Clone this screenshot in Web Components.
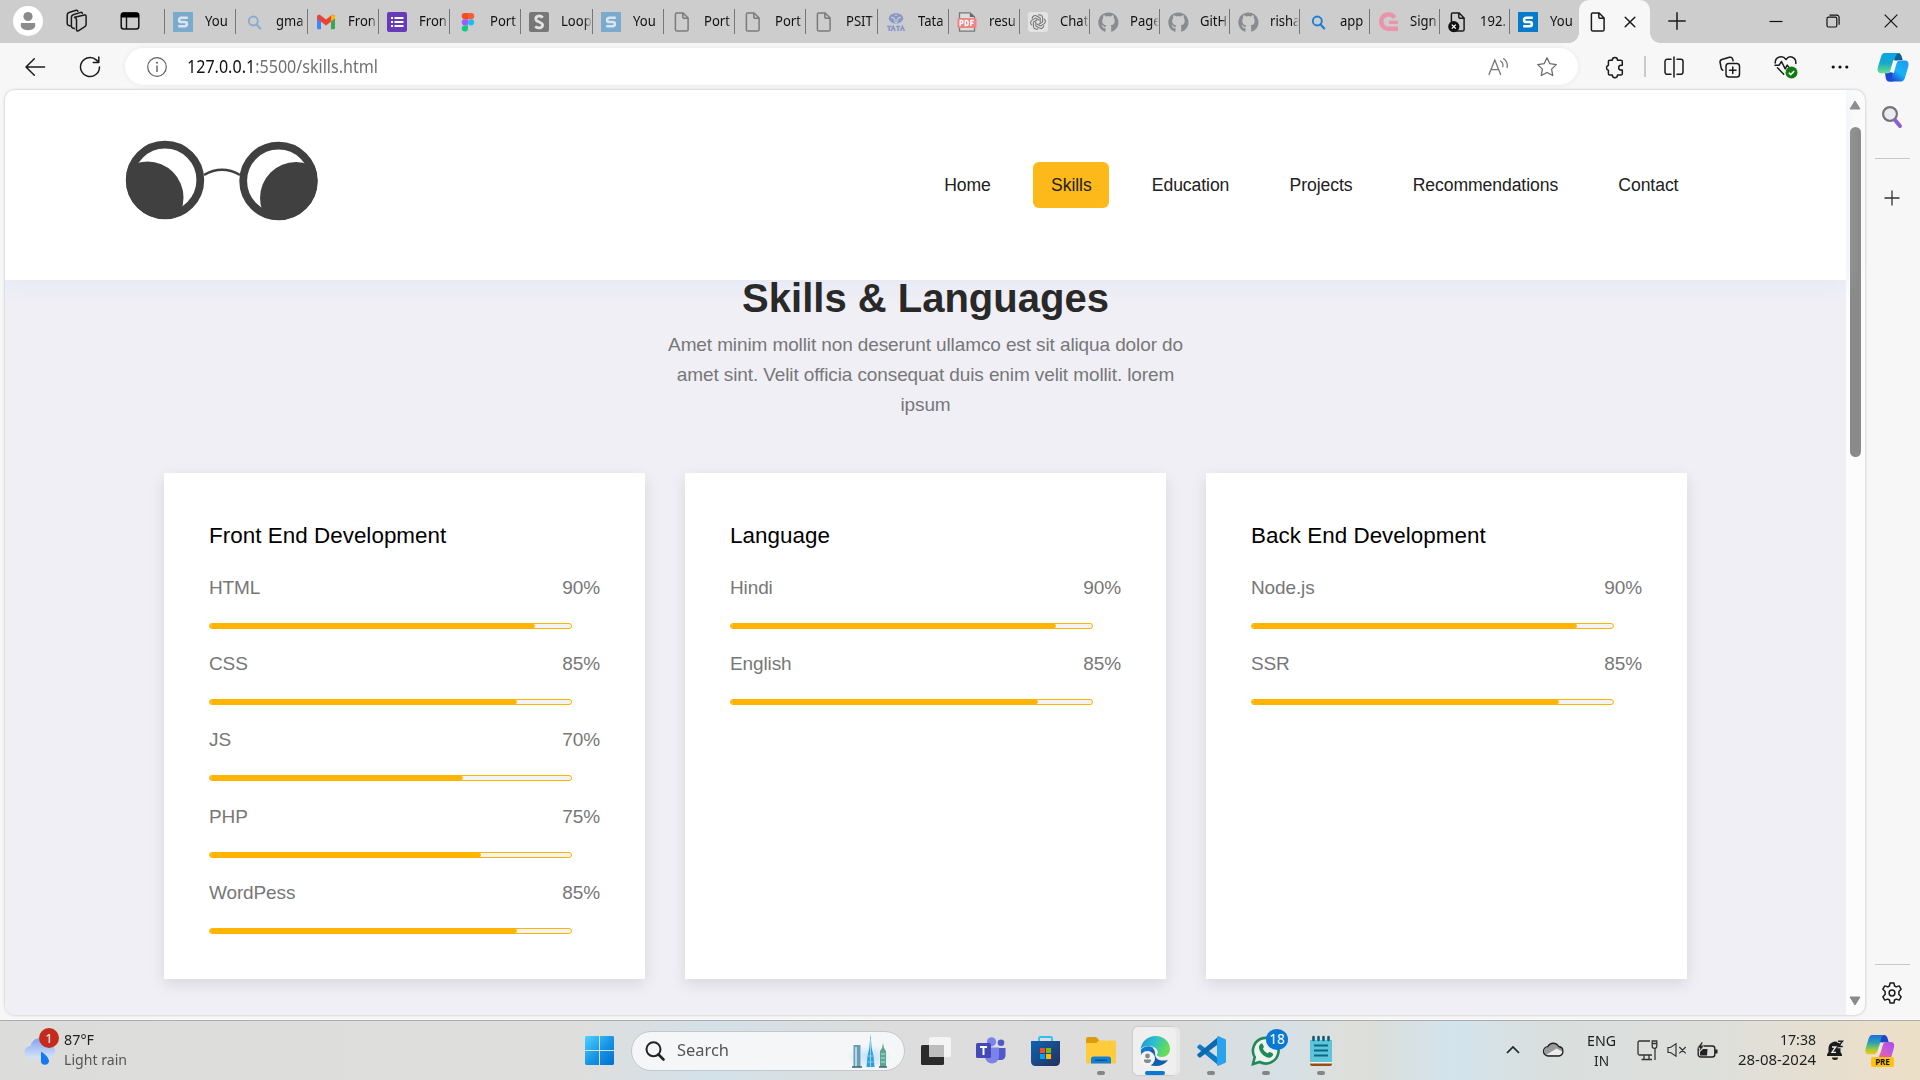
<!DOCTYPE html>
<html lang="en">
<head>
<meta charset="utf-8">
<title>Skills</title>
<style>
html,body{margin:0;padding:0}
body{width:1920px;height:1080px;overflow:hidden;background:#f7f7f7;font-family:"Noto Sans","Open Sans",sans-serif}
</style>
</head>
<body>
<desktop-screen></desktop-screen>
<script>
const STROKE = 'fill="none" stroke="#1b1b1b" stroke-width="1.5" stroke-linecap="round" stroke-linejoin="round"';
const GH = '<path fill="#888b8f" d="M10 .4a10 10 0 0 0-3.2 19.4c.5.1.7-.2.7-.5v-3.2c-2.400 .5-2.9-1-3.200-1.800-.3-.6-.8-.9-1.200-1.200.8-.4 1.700.1 2.300 1 .6.900 1.400 1 2.300.6.1-.6.3-1.100.7-1.400-2.700-.3-4.200-1.500-4.200-4.600 0-1.200.4-2 1-2.700-.2-.8-.2-1.800.2-2.700 1 0 1.900.6 2.700 1.100a9 9 0 0 1 4.700 0c.8-.5 1.700-1.100 2.700-1.100.4 1 .4 1.900.2 2.700.7.8 1 1.600 1 2.700 0 3.100-1.500 4.300-4.200 4.600.5.500.7 1.100.7 2v4c0 .3.2.6.7.5A10 10 0 0 0 10 .4z"/>';
const DOC = (c, w) => `<path d="M4.500 .9h6.600l5 5.200v11.400a1.600 1.600 0 0 1-1.600 1.600h-9.500a1.600 1.600 0 0 1-1.600-1.600v-15a1.600 1.600 0 0 1 1.100-1.600zM10.800 1v3.900a1.400 1.400 0 0 0 1.400 1.400h3.800" fill="none" stroke="${c}" stroke-width="${w}"/>`;
const S = (bg, fg) => `<rect width="20" height="20" fill="${bg}"/><path d="M14.800 5.800H8.200a2.100 2.100 0 0 0-2.100 2.100c0 1.200.9 2.100 2.100 2.100h3.600a2.100 2.100 0 0 1 2.100 2.100c0 1.200-.9 2.100-2.100 2.100H5.200" fill="none" stroke="${fg}" stroke-width="2.600"/>`;
const LENS = c => `<circle cx="9.300" cy="9" r="4.500" fill="none" stroke="${c}" stroke-width="1.900"/><path d="M12.600 12.400l3.600 4" stroke="${c}" stroke-width="2.200" stroke-linecap="round"/>`;
const PEOPLE = '<circle cx="15" cy="10.500" r="4.600" fill="#8b8b8b"/><path d="M8 17h14c1.400 5-2.500 7.200-7 7.200S6.600 22 8 17z" fill="#8b8b8b"/>';

/* name: [width, height, markup] */
const ICONS = {
  profile:[30,30,`<circle cx="15" cy="15" r="15" fill="#fff"/>${PEOPLE}`],
  workspaces:[24,24,`<g ${STROKE}><path d="M9.500 8.200l10-2.300a1.300 1.300 0 0 1 1.600 1.300v8.300c0 1-.4 1.600-1.200 2.100l-6.600 4.200c-.9.600-1.800.1-1.800-.9V10.600c0-1.200-.8-1.900-2-2.400z"/><path d="M9.300 19.500l-1.600-.5c-1-.4-1.300-1-1.300-2V8.200c0-1.200.6-2 1.800-2.400l7.600-2.400c.9-.2 1.600.2 1.600 1"/><path d="M5.200 17L3.600 16.400c-1-.4-1.400-1-1.400-2V5.900c0-1.200.7-2 1.800-2.400L11.200 1.300c.9-.2 1.500.1 1.700.9"/></g>`],
  tabsmenu:[20,20,`<rect x="1.200" y="2" width="17.600" height="16" rx="2.500" fill="none" stroke="#111" stroke-width="1.500"/><path d="M1 6.500V4a2.500 2.500 0 0 1 2.500-2.500h13A2.500 2.500 0 0 1 19 4v2.500z" fill="#000"/><path d="M6.500 6v12" stroke="#111" stroke-width="1.400"/>`],
  sFade:[20,20,S('#7aabcd','#d9e6ef')], sBlue:[20,20,S('#077ac9','#fff')],
  sGrey:[20,20,'<rect width="20" height="20" rx="2" fill="#777"/><path d="M13.800 5.600c-2.500-2.600-7-1.900-7 1.300 0 3.500 6.800 2.700 6.800 6.200 0 3.100-5 3.800-7.400 1.300" fill="none" stroke="#e2e2e2" stroke-width="2.800"/>'],
  lensFade:[20,20,LENS('#86acd0')], lensBlue:[20,20,LENS('#1d7fd6')],
  gmail:[20,20,'<path d="M1 5v11c0 .7.500 1.200 1.200 1.200H5V9z" fill="#4285f4"/><path d="M15 9v8.200h2.800c.7 0 1.200-.5 1.200-1.200V5z" fill="#34a853"/><path d="M1 4.700C1 3 3.200 2.300 4.500 3.300L10 7.600l5.500-4.300C16.800 2.300 19 3 19 4.700V6.500l-9 7-9-7z" fill="#ea4335"/><path d="M15 3.700c1.500-1.200 4-.8 4 1.500v1.300l-4 3.100z" fill="#fbbc04"/>'],
  forms:[20,20,'<rect width="20" height="20" rx="2" fill="#673ab7"/><path d="M4 6h2M4 10h2M4 14h2M7.500 6H16.500M7.500 10H16.500M7.500 14H16.500" stroke="#fff" stroke-width="2.200"/>'],
  figma:[20,20,'<path d="M10 1H6.800a3.100 3.100 0 0 0 0 6.200H10z" fill="#f24e1e"/><path d="M10 1h3.200a3.100 3.100 0 0 1 0 6.200H10z" fill="#ff5a36"/><path d="M10 7.200H6.800a3.100 3.100 0 0 0 0 6.200H10z" fill="#a259ff"/><circle cx="13.100" cy="10.300" r="3.100" fill="#1abcfe"/><path d="M10 13.400H6.800a3.100 3.100 0 1 0 3.200 3.100z" fill="#0acf83"/>'],
  doc:[20,20,DOC('#7b7b7b',1.5)], docBlack:[20,20,DOC('#1b1b1b',1.5)],
  docErr:[20,20,DOC('#1b1b1b',1.5)+'<circle cx="5.800" cy="14.600" r="5.600" fill="#111"/><path d="M3.800 12.600l4 4m0-4l-4 4" stroke="#fff" stroke-width="1.300"/>'],
  tata:[20,20,'<ellipse cx="10" cy="6.300" rx="7.200" ry="5.200" fill="#8799cb"/><path d="M5 5.500Q9 4.500 9.300 11M15 5.500Q11 4.500 10.700 11M10 2v2" stroke="#cdcdcd" stroke-width="1.200" fill="none"/><path d="M1 14.500h4.600M3.300 14v5M5.200 19l2-4.500 2 4.500M10 14.500h4.200M12.100 14v5M14.400 19l2-4.500 2 4.500" stroke="#8799cb" stroke-width="1.700" fill="none"/>'],
  pdf:[20,20,'<path d="M2.500.8h10.700l4.300 4v14.400h-15z" fill="#ddd" stroke="#777" stroke-width="1.300"/><path d="M12.800.8v4.300h4.700z" fill="#666"/><rect x=".5" y="6" width="19" height="10" rx="1" fill="#ee8585"/><path d="M3.200 14V8.500h1.300a1.400 1.400 0 0 1 0 3H3.500M8.300 8.500V13.500h.8c2.800 0 2.800-5 0-5zM13.800 14V8.500h3M14 11.200h2.400" fill="none" stroke="#fff" stroke-width="1.400"/>'],
  gpt:[20,20,'<rect width="20" height="20" rx="3" fill="#e3e3e3"/><g fill="none" stroke="#777" stroke-width="1.100">' + [0,60,120,180,240,300].map(a=>`<path d="M10 3.300a3 3 0 0 1 4.600 2.500v4.100l-3.900 2.300" transform="rotate(${a} 10 10)"/>`).join('') + '</g>'],
  github:[20,20,GH],
  signup:[20,20,'<path d="M16.500 5.800A7.200 7.200 0 1 0 10 16.800h10" fill="none" stroke="#e993ac" stroke-width="4.400"/><path d="M11 10.300h9" stroke="#e993ac" stroke-width="3.200"/>'],
  close:[12,12,`<path d="M1.200 1.200l9.600 9.600m0-9.600l-9.600 9.600" ${STROKE}/>`],
  plus:[18,18,`<path d="M9 .8v16.400M.8 9h16.400" ${STROKE}/>`],
  plusThin:[16,16,'<path d="M8 .5v15M.5 8h15" stroke="#333" stroke-width="1.300"/>'],
  min:[14,14,'<path d="M.5 7.500h13" stroke="#111" stroke-width="1.200"/>'],
  restore:[14,14,'<rect x="1" y="3.200" width="9.800" height="9.800" rx="1.500" fill="none" stroke="#111" stroke-width="1.200"/><path d="M3.500 1.200h7.400a2.200 2.200 0 0 1 2.200 2.200v7.400" fill="none" stroke="#111" stroke-width="1.200"/>'],
  winclose:[14,14,'<path d="M.7.700l12.600 12.600m0-12.600L.7 13.300" stroke="#111" stroke-width="1.200"/>'],
  back:[20,20,`<path d="M19.500 10H1M9.300 1.800L1 10l8.300 8.200" ${STROKE}/>`],
  refresh:[22,22,`<path d="M20.500 11a9.500 9.500 0 1 1-3-6.900l2 2M19.800 1v5.400h-5.500" ${STROKE}/>`],
  info:[20,20,'<circle cx="10" cy="10" r="9.300" fill="none" stroke="#5f5f5f" stroke-width="1.200"/><path d="M10 8.500v6.500" stroke="#5f5f5f" stroke-width="1.400"/><circle cx="10" cy="5.800" r="1" fill="#5f5f5f"/>'],
  read:[22,20,'<g fill="none" stroke="#767676" stroke-width="1.300" stroke-linecap="round"><path d="M1 17.500L6.800 3l5.800 14.500M3 12.600h7.600M12.600 4c1.900 1.200 2.700 3.200 2.200 5.700M15.600 1.800c3 2 4.200 5 3.500 8.700"/></g>'],
  star:[22,22,'<path d="M11 1.800l2.850 5.900 6.450.9-4.700 4.500 1.150 6.400L11 16.500l-5.750 3 1.150-6.400L1.700 8.600l6.450-.9z" fill="none" stroke="#6b6b6b" stroke-width="1.300" stroke-linejoin="round"/>'],
  puzzle:[20,22,`<path d="M7.300 4.200a2.600 2.600 0 0 1 5.200 0h3.400c.8 0 1.400.6 1.400 1.400v3.700h-1.200a2.400 2.400 0 0 0 0 4.800h1.200v3.600c0 .8-.6 1.400-1.400 1.400h-3.400a2.600 2.600 0 0 1-5.200 0H4.800c-.8 0-1.400-.6-1.400-1.400v-3.500a2.600 2.600 0 0 1 0-5V5.600c0-.8.6-1.400 1.400-1.400z" ${STROKE}/>`],
  split:[20,22,`<path d="M10 1v20M7 3.300H3.200A2.200 2.200 0 0 0 1 5.500v10.600a2.200 2.200 0 0 0 2.200 2.200H7M13 3.300h3.800A2.200 2.200 0 0 1 19 5.500v10.600a2.200 2.200 0 0 1-2.200 2.200H13" ${STROKE}/>`],
  collections:[22,22,`<g ${STROKE}><rect x="7" y="7.500" width="13.500" height="13.500" rx="2.800"/><path d="M13.750 11v6.500M10.500 14.250h6.500M3.800 14.300C2.700 13.800 2.400 13 2.200 12L1.100 6.500C.8 5 1.500 3.900 2.900 3.500L10.400 1.300c1.600-.4 2.700.2 3.200 1.700l.5 1.700"/></g>`],
  heart:[24,24,`<path d="M9.700 19.200L3.500 12.700M12 4.500C8.600-.2 1.200 1.500 1.200 8M12 4.500c3.400-4.700 10.400-2.800 9.800 4M1 10.200h4.200l2.300-3.700 3.700 7.300 2-3.700 1.600 2" ${STROKE}/><circle cx="17.500" cy="17.600" r="6" fill="#107c10"/><path d="M14.800 17.700l1.900 1.900 3.500-3.600" fill="none" stroke="#fff" stroke-width="1.600"/>`],
  dots:[18,6,'<g fill="#111"><circle cx="2.200" cy="3" r="1.600"/><circle cx="9" cy="3" r="1.600"/><circle cx="15.800" cy="3" r="1.600"/></g>'],
  copilot:[32,30,`<defs><linearGradient id="a" x1="0" y1="0" x2="0" y2="1"><stop stop-color="#0aa5e8"/><stop offset=".5" stop-color="#15a9c7"/><stop offset="1" stop-color="#6be08b"/></linearGradient><linearGradient id="b" x1="1" y1="0" x2=".3" y2="1"><stop stop-color="#2196f3"/><stop offset=".6" stop-color="#18b3f5"/><stop offset="1" stop-color="#1a4fd8"/></linearGradient></defs><path d="M16 1h5c2 0 3 1.500 3.500 3l1.200 4.300h-4c-3 0-4 2-4.800 5z" fill="#0b5f97"/><path d="M7.500 1h14c-2 .8-2.800 2.200-3.600 5l-3 10.500c-.8 3-2.500 4.800-5.500 4.800H4.200C.6 21.300 0 18 1.100 14.500l2.700-9C4.700 2.600 5.600 1 7.500 1z" fill="url(#a)"/><path d="M8 21.300h2c3 0 4.400-2 5.100-4.500L17 10l-1 19.500h-4c-2 0-2.700-1.400-3.200-3.300z" fill="#1f46d6"/><path d="M24.500 29.500H11.500c2-.8 2.800-2.500 3.600-5l3-11c.9-3.300 2.600-5 5.500-5h4.500c3.500 0 4 3.300 3 6.600l-2.900 10c-.9 2.900-1.800 4.400-3.700 4.400z" fill="url(#b)"/><path d="M18.300 8.500l-3.500 12" stroke="#fff" stroke-width="4"/>`],
  sideSearch:[22,24,'<circle cx="9" cy="9" r="6.900" fill="#e9edf2" stroke="#747474" stroke-width="2.200"/><path d="M14 15l5 6" stroke="#8d5fd0" stroke-width="4" stroke-linecap="round"/>'],
  gear:[22,22,`<path d="M9.100 1h3.800l.7 3 1.600.9 3-1 1.900 3.300-2.200 2.300v3l2.200 2.300-1.900 3.300-3-1-1.600.9-.7 3H9.100l-.7-3-1.600-.9-3 1-1.900-3.300 2.200-2.300v-3L1.900 7.200l1.900-3.300 3 1 1.600-.9z" ${STROKE}/><circle cx="11" cy="11" r="2.900" ${STROKE}/>`],
  glasses:[194,90,'<defs><clipPath id="l"><circle cx="40" cy="40" r="39"/></clipPath><clipPath id="r"><circle cx="153.500" cy="41" r="39"/></clipPath></defs><g fill="#404040"><circle clip-path="url(#l)" cx="22.500" cy="57.500" r="36"/><circle clip-path="url(#r)" cx="171" cy="58" r="36"/></g><g fill="none" stroke="#404040"><circle cx="40" cy="40" r="35.300" stroke-width="7.800"/><circle cx="153.500" cy="41" r="35.300" stroke-width="7.800"/><path d="M79 35Q97 24.500 115 35" stroke-width="2.600"/></g>'],
  weather:[32,30,'<defs><linearGradient id="w" x1="0" y1="0" x2="0" y2="1"><stop stop-color="#7fa5ee"/><stop offset="1" stop-color="#d6e3f8"/></linearGradient></defs><path d="M6.500 22a6 6 0 0 1 0-12A9 9 0 0 1 24 8.600a6.500 6.500 0 0 1 1 13.400z" fill="url(#w)"/><path d="M17 15.500c5 3 8 7 8 10a4.200 4.200 0 0 1-8 .7z" fill="#1479f5"/>'],
  win:[29,29,'<defs><linearGradient id="g" x1="0" y1="0" x2="1" y2="1"><stop stop-color="#4cd3ff"/><stop offset=".55" stop-color="#1592e2"/><stop offset="1" stop-color="#0070d0"/></linearGradient></defs><path d="M1 0h13v14H0V1zM15 0h13l1 1v13H15zM0 15h14v14H1l-1-1zM15 15h14v13l-1 1H15z" fill="url(#g)"/>'],
  search:[20,20,'<circle cx="8.500" cy="8.300" r="7" fill="none" stroke="#222" stroke-width="2"/><path d="M13.500 13.500l5 5" stroke="#222" stroke-width="2.600" stroke-linecap="round"/>'],
  city:[44,36,'<defs><radialGradient id="h"><stop stop-color="#c4e0fa"/><stop offset="1" stop-color="#f4f6f7"/></radialGradient></defs><ellipse cx="22" cy="24" rx="22" ry="12" fill="url(#h)"/><path d="M6.500 12h7v22h-7z" fill="#6a9db8"/><path d="M8 14h2v20H8z" fill="#b8d8e6"/><path d="M23.500 1l1.200 14 1.800 8 1 11h-8l1-11 1.800-8z" fill="#2e9fd6"/><path d="M23.500 6v28M21 23h5M20.500 29h6" stroke="#8ed0f0" stroke-width="1"/><path d="M36 10l1 5 2 3v16h-6V18l2-3z" fill="#5aa893"/><path d="M34 21h4M34 25h4M34 29h4" stroke="#bfe3d5"/><path d="M5 34h10M32 34h8" stroke="#3d6478" stroke-width="1.500"/>'],
  taskview:[30,28,'<rect x="0" y="8" width="23" height="20" rx="1.500" fill="#2b2b2b"/><rect x="8" y="0" width="22" height="20" rx="1.500" fill="#f4f4f4"/><path d="M8 8h15v12H9.500A1.500 1.500 0 0 1 8 18.500z" fill="#bdbdbd"/>'],
  teams:[30,27,'<circle cx="25" cy="5.800" r="3.300" fill="#5059c9"/><path d="M19 11h10.500v7c0 3-2 5-5 5H19z" fill="#5059c9"/><circle cx="15.500" cy="4.800" r="4.600" fill="#7b83eb"/><path d="M8 10.500h15v9a7 7 0 0 1-14 0z" fill="#7b83eb"/><rect y="6" width="15" height="15" rx="1.500" fill="#444ab5"/><path d="M4 10h7M7.500 10v8" stroke="#fff" stroke-width="2"/>'],
  store:[29,30,'<defs><linearGradient id="s" x1="0" y1="0" x2="1" y2="1"><stop stop-color="#0f63b5"/><stop offset="1" stop-color="#243059"/></linearGradient></defs><path d="M8 6V2.500A1.500 1.500 0 0 1 9.500 1h10A1.500 1.500 0 0 1 21 2.500V6" fill="none" stroke="#2bc0f2" stroke-width="1.800"/><path d="M0 5h29v20c0 3-1.500 5-5 5H5c-3.500 0-5-2-5-5z" fill="url(#s)"/><path d="M9 12h5v5H9z" fill="#f25022"/><path d="M15 12h5v5h-5z" fill="#7fba00"/><path d="M9 18h5v5H9z" fill="#00a4ef"/><path d="M15 18h5v5h-5z" fill="#ffb900"/>'],
  folder:[30,27,'<path d="M0 2a2 2 0 0 1 2-2h8l3 3v6H0z" fill="#dc9c0c"/><path d="M0 6h10l3-2.500h15.500A1.500 1.500 0 0 1 30 5v20a1.500 1.500 0 0 1-1.500 1.500h-27A1.500 1.500 0 0 1 0 25z" fill="#fdcb3c"/><path d="M5 26.500V22a2.500 2.500 0 0 1 2.500-2.500h15A2.500 2.500 0 0 1 25 22v4.500z" fill="#1180d8"/><path d="M9 23.300h12" stroke="#0a4f91" stroke-width="1.500"/>'],
  edge:[30,30,'<defs><linearGradient id="e" x1="0" y1="0" x2="1" y2=".3"><stop stop-color="#1a92d4"/><stop offset=".5" stop-color="#2cc0d0"/><stop offset="1" stop-color="#68dd52"/></linearGradient></defs><path d="M1 14c5-5 14-4 14 3 0 6 4 9 13 7-3 4-7 6-12 6C6 30 0 23 1 14z" fill="#0f5faa"/><path d="M13.500 12C9 14 8 21 12 27c-7-1-12-7-11-13 2-4 9-5 12.500-2z" fill="#1577cf"/><path d="M.5 13C2 5 8 0 15.500 0 24 0 30 6 30 13c0 5-4 8-8 8-3 0-5.500-1-5-2.500 1.500-1.500 1-5-2.500-7-5-2.500-11-1.500-14 1.500z" fill="url(#e)"/><circle cx="7.500" cy="22.500" r="7.500" fill="#f4f4f4"/><circle cx="7.500" cy="20" r="2.400" fill="#888"/><path d="M4 23.500h7c.5 2.800-1.500 3.500-3.500 3.500S3.500 26.300 4 23.500z" fill="#888"/>'],
  code:[30,30,'<path d="M2 9.500l2-1.300 18 13.500V29L1 11.500z" fill="#0f7bc6"/><path d="M2 20.500l2 1.300L22 8.300V1L1 18.500z" fill="#0c69b0"/><path d="M22 0l7 3c.7.300 1 .8 1 1.500v21c0 .7-.3 1.200-1 1.500l-7 3c-.8-.4-1-1-1-1.800V1.800C21 1 21.200.4 22 0z" fill="#2aa3ef"/>'],
  whatsapp:[30,30,'<path d="M2 28l1.700-6.800A12.800 12.800 0 1 1 8.700 26z" fill="#eef3f0" stroke="#1f8a57" stroke-width="2.600"/><path d="M9 8.500c1.500-1.500 2.500-1 3.200.7.900 2 .9 2-.3 3.600 1.100 2.300 2.600 3.700 5 4.700 1.400-1.700 1.600-1.700 3.600-.7 1.700.8 2 1.500 1 3-2.500 3.800-7.500 1.300-10.500-1.800S7 10.500 9 8.500z" fill="#1f8a57"/>'],
  notepad:[22,30,'<path d="M0 4h22v22H0z" fill="#5ec4da"/><path d="M0 26h22v2a2 2 0 0 1-2 2H2a2 2 0 0 1-2-2z" fill="#9a4a12"/><path d="M0 26h22v1.500H0z" fill="#f4f4f4"/><path d="M4 9.500h14M4 14.500h14M4 19.500h14" stroke="#0b6786" stroke-width="1.800"/><path d="M3.500 1v3M8.500 1v3M13.500 1v3M18.500 1v3" stroke="#0c5c78" stroke-width="2.600" stroke-linecap="round"/>'],
  chevron:[14,8,'<path d="M1 7l6-6 6 6" fill="none" stroke="#222" stroke-width="1.700"/>'],
  cloud:[21,15,'<path d="M5.500 13.800a4.700 4.700 0 0 1-.6-9.200A6 6 0 0 1 15.600 4.500a4.700 4.700 0 0 1 .4 9.300z" fill="#9b9b9b"/><path d="M3 13L13.500 6.500l6.500 3.500-2 3.500z" fill="#ececec"/><path d="M5.500 14a4.700 4.700 0 0 1-.6-9.400A6 6 0 0 1 15.600 4.500a4.800 4.800 0 0 1 .4 9.500z" fill="none" stroke="#222" stroke-width="1.300"/>'],
  monitor:[21,21,'<g fill="none" stroke="#333" stroke-width="1.300"><path d="M13 1H2.500A1.500 1.500 0 0 0 1 2.500v11A1.500 1.500 0 0 0 2.500 15H15M7 15v4M12 15v4M4.500 19.500H15M18 8v12"/><path d="M15.200 1h4.600v5a2 2 0 0 1-4.600 0zM15.200 3.500h4.600"/></g>'],
  mute:[20,14,'<path d="M1 4.500h2.500L9 .8v12.400L3.500 9.500H1zM12.300 4l6.400 6.400m0-6.400l-6.400 6.400" fill="none" stroke="#333" stroke-width="1.200"/>'],
  battery:[21,16,'<rect x="1.200" y="4" width="16.600" height="11" rx="2.500" fill="none" stroke="#222" stroke-width="1.400"/><path d="M18 7.500h2.500v4H18z" fill="#222"/><path d="M3 13.500V10l3-3h4.500l-.5 6.500z" fill="#222"/><path d="M4.500 0L.5 6h2.500l-1 4 5-6H4.500l1.500-4z" fill="#222" stroke="#dcdcda" stroke-width=".5"/>'],
  bell:[18,20,'<path d="M1 16v-1.500l1.500-2.500V8a6.500 6.500 0 0 1 11-4.500h1V12l1.500 2.500V16zM6 17.500h6a3 2.500 0 0 1-6 0z" fill="#1c1c1c"/><path d="M11 1.500h6v5.800h-5.500" fill="none" stroke="#dcdcda" stroke-width="2"/><path d="M12 1.200h4.500l-4.300 5.300h4.500" fill="none" stroke="#1c1c1c" stroke-width="1.400"/><path d="M6 7h3.800L6 12.300h4" fill="none" stroke="#eee" stroke-width="1.300"/>'],
  copilotPre:[30,30,`<defs><linearGradient id="c" x1="0" y1="0" x2="0" y2="1"><stop stop-color="#1b6fe0"/><stop offset=".4" stop-color="#2aa1b4"/><stop offset=".75" stop-color="#9ccb3c"/><stop offset="1" stop-color="#f5c518"/></linearGradient><linearGradient id="d" x1="1" y1="0" x2="0" y2="1"><stop stop-color="#a24df0"/><stop offset=".5" stop-color="#d25bd0"/><stop offset="1" stop-color="#ff6a5a"/></linearGradient></defs><path d="M14 0h5c2 0 3 1.500 3.500 3l1.200 4.300h-4c-3 0-4 2-4.800 5z" fill="#1a49c8"/><path d="M7 0h12c-2 .8-2.600 2.200-3.300 5l-2.600 9.500c-.8 3-2.200 4.800-5 4.800H3.700C.4 19.300-.2 16 .8 13l2.400-8C4 2 5 0 7 0z" fill="url(#c)"/><path d="M23 26H11c2-.8 2.500-2.500 3.200-5l2.600-9c.9-3.300 2.400-5 5-5H26c3.200 0 3.700 3.300 2.800 6.200l-2.600 9C25.400 25 24.800 26 23 26z" fill="url(#d)"/><path d="M17 7.500L13.500 19" stroke="#f0e6dc" stroke-width="3"/>`],
};

const def = (name, css, html = '<slot></slot>', setup) => customElements.define(name, class extends HTMLElement {
  connectedCallback() {
    if (this.shadowRoot) return;
    const root = this.attachShadow({mode:'open'});
    root.innerHTML = `<style>*{box-sizing:border-box}${css}</style>` + (typeof html === 'function' ? html(this) : html);
    if (setup) setup(this, root);
  }
});

/* inline vector icon, looked up by name */
def('ui-icon', ':host{display:block;flex:none}svg{display:block;overflow:visible}', el => {
  const [w,h,m] = ICONS[el.getAttribute('name')];
  return `<svg width="${w}" height="${h}" viewBox="0 0 ${w} ${h}">${m}</svg>`;
});

/* one-line text condensed to the width in its w attribute */
def('ui-text', ':host{display:block;flex:none;white-space:nowrap}span{display:inline-block;transform-origin:0 0}', '<span><slot></slot></span>', (el, root) => {
  const w = +el.getAttribute('w'), s = root.querySelector('span');
  el.style.width = w + 'px';
  s.style.transform = `scaleX(${w / s.getBoundingClientRect().width})`;
});

def('browser-tab', `:host{display:flex;flex:none;height:25px;border-left:1px solid #777;align-items:center;padding-left:8px;margin-top:9px;overflow:hidden}
ui-icon{margin-right:12px}
.t{flex:1;overflow:hidden;-webkit-mask:linear-gradient(90deg,#000 75%,transparent 100%);mask:linear-gradient(90deg,#000 75%,transparent 100%)}
span{display:inline-block;white-space:nowrap;font-size:15px;line-height:24px;transform:scaleX(.87) translateY(-2px);transform-origin:0 0;color:#111}`,
  el => `<ui-icon name="${el.getAttribute('icon')}"></ui-icon><div class="t"><span><slot></slot></span></div>`);

const TABS = [['sFade','You',71],['lensFade','gma',72],['gmail','Fron',71],['forms','Fron',71],['figma','Port',71],['sGrey','Loop',72],['sFade','You',71],['doc','Port',71],['doc','Port',71],['doc','PSIT',72],['tata','Tata',71],['pdf','resu',71],['gpt','Chat',70],['github','Page',70],['github','GitH',70],['github','risha',70],['lensBlue','app',70],['signup','Sign',70],['docErr','192.',70],['sBlue','You',70]];

def('tab-strip', `:host{display:flex;height:43px;background:#cdcdcd;align-items:flex-start}
.lead{display:flex;width:164px;height:42px;align-items:center;padding-left:13px}
.active{flex:none;width:71px;height:43px;background:#f7f7f7;border-radius:10px 10px 0 0;display:flex;align-items:center;padding:1px 0 0 9px;position:relative}
.active ui-icon+ui-icon{margin-left:16px}
.active:before,.active:after{content:"";position:absolute;bottom:0;width:10px;height:10px}
.active:before{left:-10px;background:radial-gradient(circle at 0 0,transparent 9.500px,#f7f7f7 10px)}
.active:after{right:-10px;background:radial-gradient(circle at 100% 0,transparent 9.500px,#f7f7f7 10px)}
.rest{flex:1;display:flex;height:42px;align-items:center;padding-left:18px}
.ctl{margin-left:auto;display:flex;gap:44px;padding-right:22px}.ctl ui-icon:first-child{margin-right:-1px}`,
`<div class="lead"><ui-icon name="profile"></ui-icon><ui-icon name="workspaces" style="margin-left:22px"></ui-icon><ui-icon name="tabsmenu" style="margin-left:31px"></ui-icon></div>
${TABS.map(t=>`<browser-tab icon="${t[0]}" style="width:${t[2]}px">${t[1]}</browser-tab>`).join('')}
<div class="active"><ui-icon name="docBlack"></ui-icon><ui-icon name="close"></ui-icon></div>
<div class="rest"><ui-icon name="plus"></ui-icon><div class="ctl"><ui-icon name="min"></ui-icon><ui-icon name="restore"></ui-icon><ui-icon name="winclose"></ui-icon></div></div>`);

def('tool-bar', `:host{display:flex;height:47px;background:#f7f7f7;align-items:center;padding-left:25px}
.addr{display:flex;align-items:center;width:1453px;height:37px;border-radius:19px;background:#fff;margin-left:24px;padding-left:22px;box-shadow:0 0 5px rgba(0,0,0,.07)}
ui-text{margin-left:20px;font-size:17.500px;line-height:36px;color:#707070;margin-top:-2px}b{font-weight:400;color:#111}
.sep{width:1.500px;height:21px;background:#c9c9c9}`,
`<ui-icon name="back"></ui-icon><ui-icon name="refresh" style="margin-left:34px"></ui-icon>
<div class="addr"><ui-icon name="info"></ui-icon><ui-text w="191"><b>127.0.0.1</b>:5500/skills.html</ui-text><ui-icon name="read" style="margin-left:1110px"></ui-icon><ui-icon name="star" style="margin-left:26px"></ui-icon></div>
<ui-icon name="puzzle" style="margin-left:27px"></ui-icon><div class="sep" style="margin-left:19px"></div>
<ui-icon name="split" style="margin-left:18px"></ui-icon><ui-icon name="collections" style="margin-left:35px"></ui-icon>
<ui-icon name="heart" style="margin-left:33px"></ui-icon><ui-icon name="dots" style="margin-left:33px"></ui-icon><ui-icon name="copilot" style="margin-left:28px"></ui-icon>`);

def('nav-item', `:host{display:block;font-size:17.600px;letter-spacing:-.08px;line-height:46px;padding:0 17.600px;border-radius:6px;color:#212121;white-space:nowrap}:host([active]){background:#fdb91a}`);
def('site-header', `:host{display:flex;height:190px;background:#fff;align-items:center;justify-content:space-between;padding:0 150px 0 120px;box-shadow:0 2px 20px rgba(190,212,238,.32);position:relative}nav{display:flex;gap:25px}`,
`<ui-icon name="glasses"></ui-icon><nav><nav-item>Home</nav-item><nav-item active>Skills</nav-item><nav-item>Education</nav-item><nav-item>Projects</nav-item><nav-item>Recommendations</nav-item><nav-item>Contact</nav-item></nav>`);

def('skill-row', `:host{display:block;height:76.200px;padding-top:.6px}.t{display:flex;justify-content:space-between;font-size:19px;letter-spacing:-.12px;line-height:30px;color:#777}
.bar{width:363px;height:6px;margin-top:20px;border:1px solid #ffb400;border-radius:4px;background:#f3f3f3}.fill{height:4px;background:#ffb400;border-radius:3px}`,
el => `<div class="t"><slot></slot><span>${el.getAttribute('value')}%</span></div><div class="bar"><div class="fill" style="width:${el.getAttribute('value')}%"></div></div>`);
def('skill-card', `:host{display:block;width:481px;height:506px;background:#fff;padding:50px 45px 0;box-shadow:0 5px 15px rgba(0,0,0,.1)}
h3{margin:0 0 23.400px;font-weight:400;font-size:22.400px;letter-spacing:.04px;line-height:26px;color:#000}`, el => `<h3>${el.getAttribute('heading')}</h3><slot></slot>`);

def('site-page', `:host{display:flex;width:1860px;height:925px;border-radius:10px;overflow:hidden;background:#fcfcfc;box-shadow:0 0 3px rgba(0,0,0,.25)}
.view{width:1841px;background:#f0eff6;font-family:"Liberation Sans",Arial,sans-serif}
h1{margin:0;text-align:center;font-size:40px;line-height:36px;color:#292929;position:relative}
p{margin:14px 0 53px;text-align:center;font-size:19px;letter-spacing:-.11px;line-height:30px;color:#777}
.cards{display:flex;gap:40px;justify-content:center}
.sb{width:19px;display:flex;flex-direction:column;align-items:center;padding:10px 1px 9px 0}
.thumb{width:11px;height:330px;border-radius:6px;background:#8a8a8a;margin-top:17px}svg{display:block}.sb svg:last-child{margin-top:auto}`,
`<div class="view"><site-header></site-header><h1>Skills &amp; Languages</h1>
<p>Amet minim mollit non deserunt ullamco est sit aliqua dolor do<br>amet sint. Velit officia consequat duis enim velit mollit. lorem<br>ipsum</p>
<div class="cards">
<skill-card heading="Front End Development"><skill-row value="90">HTML</skill-row><skill-row value="85">CSS</skill-row><skill-row value="70">JS</skill-row><skill-row value="75">PHP</skill-row><skill-row value="85">WordPess</skill-row></skill-card>
<skill-card heading="Language"><skill-row value="90">Hindi</skill-row><skill-row value="85">English</skill-row></skill-card>
<skill-card heading="Back End Development"><skill-row value="90">Node.js</skill-row><skill-row value="85">SSR</skill-row></skill-card>
</div></div>
<div class="sb"><svg width="12" height="10"><path d="M6 1l5 8H1z" fill="#8a8a8a" stroke="#8a8a8a" stroke-linejoin="round"/></svg><div class="thumb"></div><svg width="12" height="10"><path d="M6 9L1 1h10z" fill="#8a8a8a" stroke="#8a8a8a" stroke-linejoin="round"/></svg></div>`);

def('side-bar', `:host{display:flex;flex-direction:column;align-items:center;width:54px;height:930px;padding-top:15px}
hr{border:0;margin:0;width:35px;height:1px;background:#c8c8c8;flex:none}`,
`<ui-icon name="sideSearch"></ui-icon><hr style="margin-top:29px"><ui-icon name="plusThin" style="margin-top:31px"></ui-icon><hr style="margin-top:758px"><ui-icon name="gear" style="margin-top:17px"></ui-icon>`);

def('task-bar', `:host{display:flex;height:60px;border-top:1px solid #adadad;align-items:center;background:linear-gradient(90deg,#dcdcdb 0,#dededd 580px,#d3e1e9 710px,#dcdddc 880px,#dbdcdb 1180px,#d6e0e5 1290px,#dedfda 1350px,#dadedb 1380px,#d3e4ee 1450px,#d9dfde 1540px,#dedfdb 1720px,#ecdfc8 1900px)}
.badge{position:absolute;border-radius:50%;color:#fff;display:flex;align-items:center;justify-content:center}
.wx{position:relative;margin-left:24px}.wx .badge{left:15px;top:-8px;width:20px;height:20px;background:#c42b1c;font-size:13px}
.col{font-size:14.500px;line-height:20px;color:#1f1f1f;flex:none;padding-bottom:4px}
.pill{display:flex;align-items:center;flex:none;width:274px;height:40px;border-radius:20px;background:#f4f6f7;border:1px solid #c5c8ca;padding-left:13px}
.app{flex:none;display:flex;flex-direction:column;align-items:center;justify-content:center;height:60px;position:relative}
.app i{position:absolute;bottom:6px;width:8px;height:4px;border-radius:2px;background:#858585}
.on{height:48px;width:43px;background:#efefef;border-radius:5px;box-shadow:4px 0 0 #e7e8e8,0 0 1px 1px rgba(0,0,0,.08)}.on i{bottom:0;width:20px;background:#0a78d4}
.n{left:15px;top:8px;width:22px;height:21px;background:#0a78d4;font-size:13.500px}
.pre{left:6px;top:36px;width:23px;height:10px;border-radius:2px;background:#ffc20e;color:#111;font:bold 8px "Noto Sans",sans-serif}
.pp{padding-bottom:1px}`,
`<div class="wx"><ui-icon name="weather"></ui-icon><span class="badge">1</span></div>
<div class="col" style="margin-left:8px"><ui-text w="30">87°F</ui-text><ui-text w="63" style="color:#555">Light rain</ui-text></div>
<ui-icon name="win" style="margin-left:458px"></ui-icon>
<div class="pill" style="margin-left:17px"><ui-icon name="search"></ui-icon><ui-text w="52" style="font-size:17px;line-height:36px;color:#555;margin-left:12px;margin-top:-1px">Search</ui-text><ui-icon name="city" style="margin-left:118px"></ui-icon></div>
<div class="app" style="margin-left:16px"><ui-icon name="taskview"></ui-icon></div>
<div class="app" style="margin-left:25px"><ui-icon name="teams"></ui-icon></div>
<div class="app" style="margin-left:25px"><ui-icon name="store"></ui-icon></div>
<div class="app" style="margin-left:26px"><ui-icon name="folder"></ui-icon><i></i></div>
<div class="app on" style="margin-left:17px"><ui-icon name="edge"></ui-icon><i></i></div>
<div class="app" style="margin-left:20px"><ui-icon name="code"></ui-icon><i></i></div>
<div class="app" style="margin-left:25px"><ui-icon name="whatsapp"></ui-icon><i></i><span class="badge n">18</span></div>
<div class="app" style="margin-left:29px"><ui-icon name="notepad"></ui-icon><i></i></div>
<ui-icon name="chevron" style="margin-left:174px;margin-top:-1px"></ui-icon><ui-icon name="cloud" style="margin-left:23px;margin-top:-2px"></ui-icon>
<div class="col" style="margin-left:23px;padding-bottom:2px"><ui-text w="29">ENG</ui-text><ui-text w="15" style="margin-left:7px">IN</ui-text></div>
<ui-icon name="monitor" style="margin-left:21px;margin-top:-1px"></ui-icon><ui-icon name="mute" style="margin-left:9px;margin-top:-1px"></ui-icon><ui-icon name="battery" style="margin-left:10px;margin-top:-2px"></ui-icon>
<div class="col" style="margin-left:20px"><ui-text w="36" style="margin-left:42px">17:38</ui-text><ui-text w="78">28-08-2024</ui-text></div>
<ui-icon name="bell" style="margin-left:10px;margin-top:-1px"></ui-icon>
<div class="app pp" style="margin-left:21px"><ui-icon name="copilotPre"></ui-icon><span class="badge pre">PRE</span></div>`);

def('desktop-screen', `:host{display:flex;flex-direction:column;width:1920px;height:1080px;overflow:hidden;background:#f7f7f7}.mid{display:flex;height:930px;padding-left:5px}`,
`<tab-strip></tab-strip><tool-bar></tool-bar><div class="mid"><site-page></site-page><side-bar></side-bar></div><task-bar></task-bar>`);
</script>
</body>
</html>
